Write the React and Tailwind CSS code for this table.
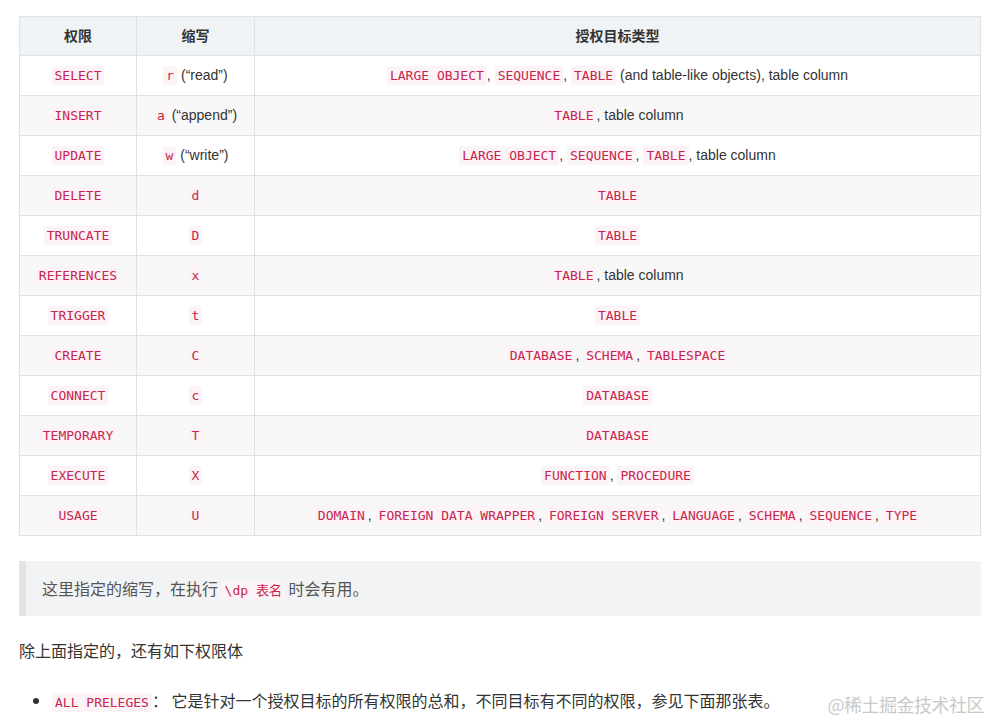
const rows = [
  ['SELECT', 'r', '(“read”)', [['LARGE OBJECT', 'SEQUENCE', 'TABLE'], ' (and table-like objects), table column']],
  ['INSERT', 'a', '(“append”)', [['TABLE'], ', table column']],
  ['UPDATE', 'w', '(“write”)', [['LARGE OBJECT', 'SEQUENCE', 'TABLE'], ', table column']],
  ['DELETE', 'd', '', [['TABLE'], '']],
  ['TRUNCATE', 'D', '', [['TABLE'], '']],
  ['REFERENCES', 'x', '', [['TABLE'], ', table column']],
  ['TRIGGER', 't', '', [['TABLE'], '']],
  ['CREATE', 'C', '', [['DATABASE', 'SCHEMA', 'TABLESPACE'], '']],
  ['CONNECT', 'c', '', [['DATABASE'], '']],
  ['TEMPORARY', 'T', '', [['DATABASE'], '']],
  ['EXECUTE', 'X', '', [['FUNCTION', 'PROCEDURE'], '']],
  ['USAGE', 'U', '', [['DOMAIN', 'FOREIGN DATA WRAPPER', 'FOREIGN SERVER', 'LANGUAGE', 'SCHEMA', 'SEQUENCE', 'TYPE'], '']],
];

function Code({ children }) {
  return (
    <code className="font-['DejaVu_Sans_Mono','Noto_Sans_CJK_SC',monospace] text-[13px] text-[#c7254e] bg-[#fbf3f5] px-[3px] py-[2px] rounded-[2px] whitespace-pre">
      {children}
    </code>
  );
}

function Targets({ items, tail }) {
  return (
    <>
      {items.map((t, i) => (
        <span key={t}>
          {i > 0 && <span>, </span>}
          <Code>{t}</Code>
        </span>
      ))}
      {tail}
    </>
  );
}

export default function App() {
  return (
    <div className="relative w-[992px] h-[722px] bg-white text-[#333] font-['Liberation_Sans','Noto_Sans_CJK_SC',sans-serif] overflow-hidden">
      <div className="pl-[19px] pr-[11px] pt-4">
        {/* Privileges table */}
        <table className="w-full border-collapse text-[14px] table-fixed">
          <colgroup>
            <col className="w-[117px]" />
            <col className="w-[118px]" />
            <col />
          </colgroup>
          <thead>
            <tr className="h-[39px] bg-[#eff3f5]">
              <th className="border border-[#dfe2e5] font-bold text-center">权限</th>
              <th className="border border-[#dfe2e5] font-bold text-center">缩写</th>
              <th className="border border-[#dfe2e5] font-bold text-center">授权目标类型</th>
            </tr>
          </thead>
          <tbody>
            {rows.map(([priv, abbr, note, [items, tail]], i) => (
              <tr key={priv} className={`h-10 ${i % 2 === 1 ? 'bg-[#f8f8f8]' : 'bg-white'}`}>
                <td className="border border-[#dfe2e5] text-center">
                  <Code>{priv}</Code>
                </td>
                <td className="border border-[#dfe2e5] text-center">
                  <Code>{abbr}</Code>
                  {note && <span> {note}</span>}
                </td>
                <td className="border border-[#dfe2e5] text-center">
                  <Targets items={items} tail={tail} />
                </td>
              </tr>
            ))}
          </tbody>
        </table>

        {/* Note */}
        <blockquote className="mt-[25px] h-[55px] flex items-center border-l-[7px] border-[#e1e3e6] bg-[#f2f3f5] pl-4 text-[16px] text-[#555] font-['Noto_Sans_CJK_SC',sans-serif]">
          <span>
            这里指定的缩写，在执行 <Code>\dp 表名</Code> 时会有用。
          </span>
        </blockquote>

        <p className="mt-[22px] leading-6 text-[16px] font-['Noto_Sans_CJK_SC',sans-serif]">除上面指定的，还有如下权限体</p>

        <ul className="mt-[26px] pl-[33px] list-disc text-[16px] leading-6 font-['Noto_Sans_CJK_SC',sans-serif]">
          <li>
            <Code>ALL PRELEGES</Code>：&nbsp;它是针对一个授权目标的所有权限的总和，不同目标有不同的权限，参见下面那张表。
          </li>
        </ul>
      </div>

      <div className="absolute right-[8px] bottom-[4px] text-[18px] text-[#c9c9c9] font-['Noto_Sans_CJK_SC',serif] tracking-[-0.5px]">
        @稀土掘金技术社区
      </div>
    </div>
  );
}
